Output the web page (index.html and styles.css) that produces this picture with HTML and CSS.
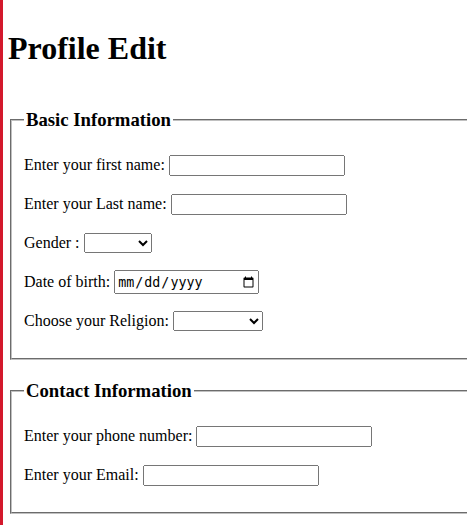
FILE: index.html
```html
<!DOCTYPE html>
<html lang="en">
<head>
<meta charset="utf-8">
<title>Profile Edit</title>
<link rel="stylesheet" href="styles.css">
</head>
<body>
<h1 class="title">Profile Edit</h1>
<form class="form">
  <fieldset class="group">
    <legend class="group-title">Basic Information</legend>
    <div class="fields">
      <div class="row"><label for="fn">Enter your first name:</label><input id="fn" class="text" type="text"></div>
      <div class="row"><label for="ln">Enter your Last name:</label><input id="ln" class="text" type="text"></div>
      <div class="row"><label for="gender">Gender :</label><select id="gender" class="sel sel-gender"><option></option><option>Male</option><option>Female</option></select></div>
      <div class="row"><label for="dob">Date of birth:</label><input id="dob" class="date" type="date"></div>
      <div class="row"><label for="rel">Choose your Religion:</label><select id="rel" class="sel sel-rel"><option></option><option>Hindu</option><option>Muslim</option><option>Christian</option></select></div>
    </div>
  </fieldset>
  <fieldset class="group">
    <legend class="group-title">Contact Information</legend>
    <div class="fields">
      <div class="row"><label for="ph">Enter your phone number:</label><input id="ph" class="text" type="text"></div>
      <div class="row"><label for="em">Enter your Email:</label><input id="em" class="text" type="text"></div>
    </div>
  </fieldset>
</form>
</body>
</html>
```
FILE: styles.css
```css
html {
  overflow: hidden;
}
body {
  margin: 0;
  padding: 8px 0 0 5px;
  border-left: 3px solid #d3182c;
  min-height: 100vh;
  box-sizing: border-box;
  font-family: "Liberation Serif", "Times New Roman", serif;
  font-size: 16px;
  color: #000;
  background: #fff;
}
.title {
  font-size: 32px;
  font-weight: bold;
  margin: 21.5px 0 42.2px;
  line-height: normal;
}
.form {
  display: flex;
  flex-direction: column;
  gap: 20px;
}
.group {
  width: 700px;
  margin: 0 2px;
  padding: 0 12px;
  border: 2px groove #c0c0c0;
  box-sizing: border-box;
}
.group-title {
  font-size: 18.72px;
  font-weight: bold;
  padding: 0 2px;
}
.fields {
  display: flex;
  flex-direction: column;
  gap: 16px;
  padding: 23px 0 25px;
}
.row {
  display: flex;
  align-items: center;
  gap: 4px;
  height: 23px;
}
.text {
  width: 176px;
  height: 21px;
  box-sizing: border-box;
}
.sel {
  height: 20px;
  box-sizing: border-box;
}
.sel-gender {
  width: 68px;
}
.sel-rel {
  width: 90px;
}
.date {
  width: 145px;
  height: 24px;
  box-sizing: border-box;
}
```
